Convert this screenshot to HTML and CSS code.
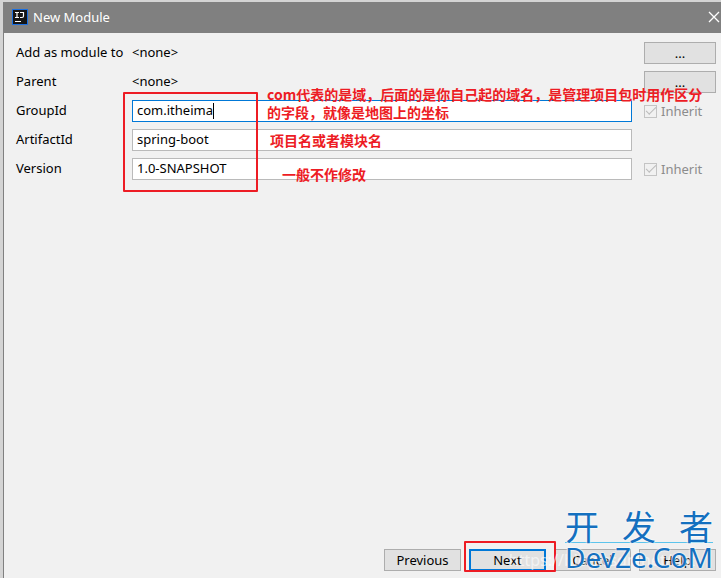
FILE: index.html
```html
<!DOCTYPE html>
<html lang="zh-CN">

    <head>
        <meta charset="utf-8">
        <meta name="viewport" content="width=device-width, initial-scale=1">
        <title>New Module</title>
        <link rel="stylesheet" href="styles.css">
    </head>

    <body>
        <main class="dialog">
            <header class="titlebar">
                <svg class="logo" viewBox="0 0 16 16" aria-hidden="true">
                    <rect width="16" height="16" fill="#1b6fe0"/>
                    <rect x="1" y="1" width="14" height="14" fill="#151515"/>
                    <path d="M3 3.500h4M5 3.500v5M3 8.500h4M8 3.500h3.500v3.500q0 1.500-1.500 1.500H8M3 12.500h6" fill="none" stroke="#fff" stroke-width="1.200"/>
                </svg>
                <h1>New Module</h1>
                <button class="close" type="button" aria-label="Close">
                    <svg viewBox="0 0 12 12"><path d="M1 1l10 10M11 1L1 11" stroke="#fff" stroke-width="1.300"/></svg>
                </button>
            </header>

            <form class="form">
                <div class="row">
                    <span class="label">Add as module to</span>
                    <span>&lt;none&gt;</span>
                    <button class="button" type="button">...</button>
                </div>
                <div class="row">
                    <span class="label">Parent</span>
                    <span>&lt;none&gt;</span>
                    <button class="button" type="button">...</button>
                </div>
                <div class="row">
                    <label class="label" for="group">GroupId</label>
                    <div class="field">
                        <input class="text focused" id="group" type="text" value="com.itheima">
                        <i class="caret"></i>
                        <div class="mark mark-fields"></div>
                        <p class="note note-group">com代表的是域，后面的是你自己起的域名，是管理项目包时用作区分<br>的字段，就像是地图上的坐标</p>
                    </div>
                    <label class="inherit"><input type="checkbox" checked disabled>Inherit</label>
                </div>
                <div class="row">
                    <label class="label" for="artifact">ArtifactId</label>
                    <div class="field">
                        <input class="text" id="artifact" type="text" value="spring-boot">
                        <p class="note note-artifact">项目名或者模块名</p>
                    </div>
                </div>
                <div class="row">
                    <label class="label" for="version">Version</label>
                    <div class="field">
                        <input class="text" id="version" type="text" value="1.0-SNAPSHOT">
                        <p class="note note-version">一般不作修改</p>
                    </div>
                    <label class="inherit"><input type="checkbox" checked disabled>Inherit</label>
                </div>
            </form>

            <footer class="actions">
                <button class="button" type="button">Previous</button>
                <div class="next">
                    <button class="button primary" type="button">Next</button>
                    <div class="mark mark-next"></div>
                </div>
                <button class="button" type="button">Cancel</button>
                <button class="button" type="button">Help</button>
                <span class="url">https://blog.csdn.net/dst</span>
                <div class="brand">
                    <div class="brand-cn"><span>开</span><span>发</span><span>者</span></div>
                    <div class="brand-en">DevZe.CoM</div>
                </div>
            </footer>
        </main>
    </body>

</html>
```

FILE: styles.css
```css
* {
    box-sizing: border-box;
}

body {
    margin: 0;
    padding: 2px 0 0 3px;
    background: #d4d4d4;
    font: 13px/20px "Noto Sans", "Noto Sans CJK SC", sans-serif;
    color: #000;
    overflow: hidden;
}

.dialog {
    display: flex;
    flex-direction: column;
    min-height: calc(100vh - 2px);
    border-left: 1px solid #808080;
    background: #f1f1f1;
}

.titlebar {
    display: flex;
    align-items: center;
    height: 31px;
    padding: 0 1px 2px 8px;
    background: #808080;
    color: #fff;
}

.logo {
    width: 16px;
    height: 16px;
}

h1 {
    flex: 1;
    margin: 0 0 0 5px;
    font-size: 13px;
    font-weight: normal;
}

.close {
    width: 12px;
    height: 12px;
    padding: 0;
    border: 0;
    background: none;
}

.close svg {
    display: block;
}

.form {
    display: flex;
    flex-direction: column;
    gap: 7px;
    padding: 9px 5px 0 12px;
}

.row {
    display: grid;
    grid-template-columns: 104px 1fr 72px;
    column-gap: 12px;
    height: 22px;
}

.label {
    white-space: nowrap;
}

.button {
    height: 22px;
    padding: 0;
    border: 1px solid #adadad;
    background: #e1e1e1;
    font: inherit;
    line-height: 18px;
    color: #000;
}

.field {
    position: relative;
}

.text {
    display: block;
    width: 100%;
    height: 22px;
    padding: 0 4px 2px;
    border: 1px solid #bababa;
    background: #fff;
    font: inherit;
    color: #000;
    outline: 0;
}

.text.focused {
    border-color: #0078d7;
}

.caret {
    position: absolute;
    left: 81px;
    top: 3px;
    width: 1px;
    height: 16px;
    background: #000;
}

.inherit {
    display: flex;
    align-items: center;
    gap: 4px;
    color: #8c8c8c;
}

.inherit input {
    appearance: none;
    width: 13px;
    height: 13px;
    margin: 0;
    border: 1px solid #c4c4c4;
    display: grid;
    place-items: center;
}

.inherit input::before {
    content: "";
    width: 9px;
    height: 4px;
    margin-bottom: 3px;
    border: solid #bcbcbc;
    border-width: 0 0 1px 1px;
    transform: rotate(-45deg);
}

/* red notes over the form */
.mark {
    position: absolute;
    border: 2px solid #ed1c24;
    border-radius: 1px;
    pointer-events: none;
}

.mark-fields {
    left: -9px;
    top: -8px;
    width: 135px;
    height: 100px;
    z-index: 1;
}

.mark-next {
    inset: -8px -10px -1px -5px;
}

.note {
    position: absolute;
    z-index: 1;
    margin: 0;
    font: bold 14px/18px "Noto Sans CJK SC", sans-serif;
    color: #ed1c24;
    white-space: nowrap;
}

.note-group {
    left: 135px;
    top: -15px;
}

.note-artifact {
    left: 138px;
    top: 2px;
}

.note-version {
    left: 150px;
    top: 7px;
}

.actions {
    position: relative;
    display: flex;
    justify-content: flex-end;
    gap: 8px;
    margin-top: auto;
    padding: 0 5px 7px 0;
}

.actions .button {
    width: 77px;
}

.next {
    position: relative;
}

.actions .primary {
    border: 2px solid #0078d7;
    line-height: 16px;
}

.url {
    position: absolute;
    right: 26px;
    bottom: 8px;
    font-size: 16px;
    color: rgba(255, 255, 255, 0.6);
}

.brand {
    position: absolute;
    right: 8px;
    bottom: 7px;
    width: 148px;
    color: #1470bf;
    text-shadow: 0 0 2px #fff, 0 0 2px #fff;
}

.brand-cn {
    display: flex;
    justify-content: space-between;
    border-bottom: 1px solid #5cc4ec;
    font: 34px/32px "Noto Sans CJK SC", sans-serif;
}

.brand-en {
    font: 28px/28px "Noto Sans", sans-serif;
    white-space: nowrap;
}
```
